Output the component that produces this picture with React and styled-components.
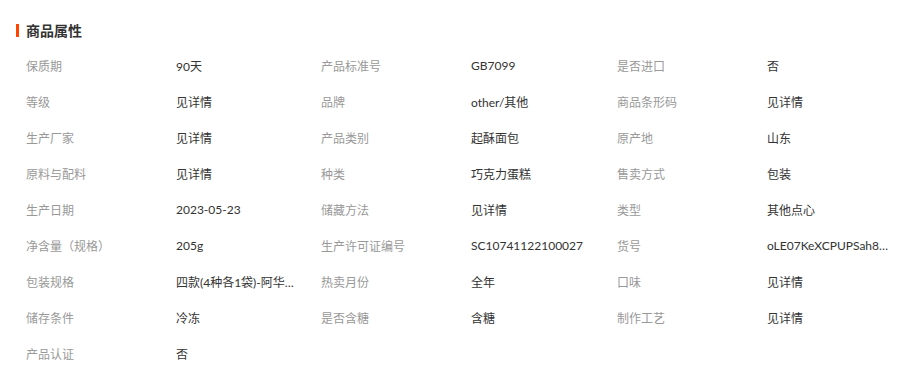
import React from 'react'
import styled, { createGlobalStyle } from 'styled-components'

const GlobalStyle = createGlobalStyle`
    body {
        margin: 0;
        background: #fff;
        font-family: "Noto Sans CJK SC", sans-serif;
    }
`

const Section = styled.section`
    padding: 20px 16px 0;
`

const Title = styled.h3`
    display: flex;
    align-items: center;
    margin: 0;
    height: 20px;
    font-size: 14px;
    font-weight: bold;
    color: #333;
    font-family: "Noto Sans CJK SC", sans-serif;
    &::before {
        content: "";
        width: 3px;
        height: 13px;
        background: #ff4400;
        margin-right: 7px;
    }
`

const Grid = styled.ul`
    list-style: none;
    margin: 7px 0 0;
    padding: 0 0 0 10px;
    display: grid;
    grid-template-columns: 295px 296px 296px;
`

const Cell = styled.li`
    display: flex;
    align-items: center;
    height: 36px;
    font-size: 12px;
    font-family: "Noto Sans CJK SC", sans-serif;
`

const Label = styled.span`
    width: 150px;
    flex-shrink: 0;
    color: #999;
`

const Value = styled.span`
    width: 124px;
    color: #333;
    font-family: "Lato", "Noto Sans CJK SC", sans-serif;
    white-space: nowrap;
    overflow: hidden;
    text-overflow: ellipsis;
`

const attrs = [
    ['保质期', '90天'],
    ['产品标准号', 'GB7099'],
    ['是否进口', '否'],
    ['等级', '见详情'],
    ['品牌', 'other/其他'],
    ['商品条形码', '见详情'],
    ['生产厂家', '见详情'],
    ['产品类别', '起酥面包'],
    ['原产地', '山东'],
    ['原料与配料', '见详情'],
    ['种类', '巧克力蛋糕'],
    ['售卖方式', '包装'],
    ['生产日期', '2023-05-23'],
    ['储藏方法', '见详情'],
    ['类型', '其他点心'],
    ['净含量（规格）', '205g'],
    ['生产许可证编号', 'SC10741122100027'],
    ['货号', 'oLE07KeXCPUPSah8qVxR2'],
    ['包装规格', '四款(4种各1袋)-阿华田能量蛋糕'],
    ['热卖月份', '全年'],
    ['口味', '见详情'],
    ['储存条件', '冷冻'],
    ['是否含糖', '含糖'],
    ['制作工艺', '见详情'],
    ['产品认证', '否'],
]

const App = () => {
    return (
        <>
            <GlobalStyle />
            <Section>
                <Title>商品属性</Title>
                <Grid>
                    {attrs.map(([k, v]) => (
                        <Cell key={k}>
                            <Label>{k}</Label>
                            <Value title={v}>{v}</Value>
                        </Cell>
                    ))}
                </Grid>
            </Section>
        </>
    )
}

export default App
